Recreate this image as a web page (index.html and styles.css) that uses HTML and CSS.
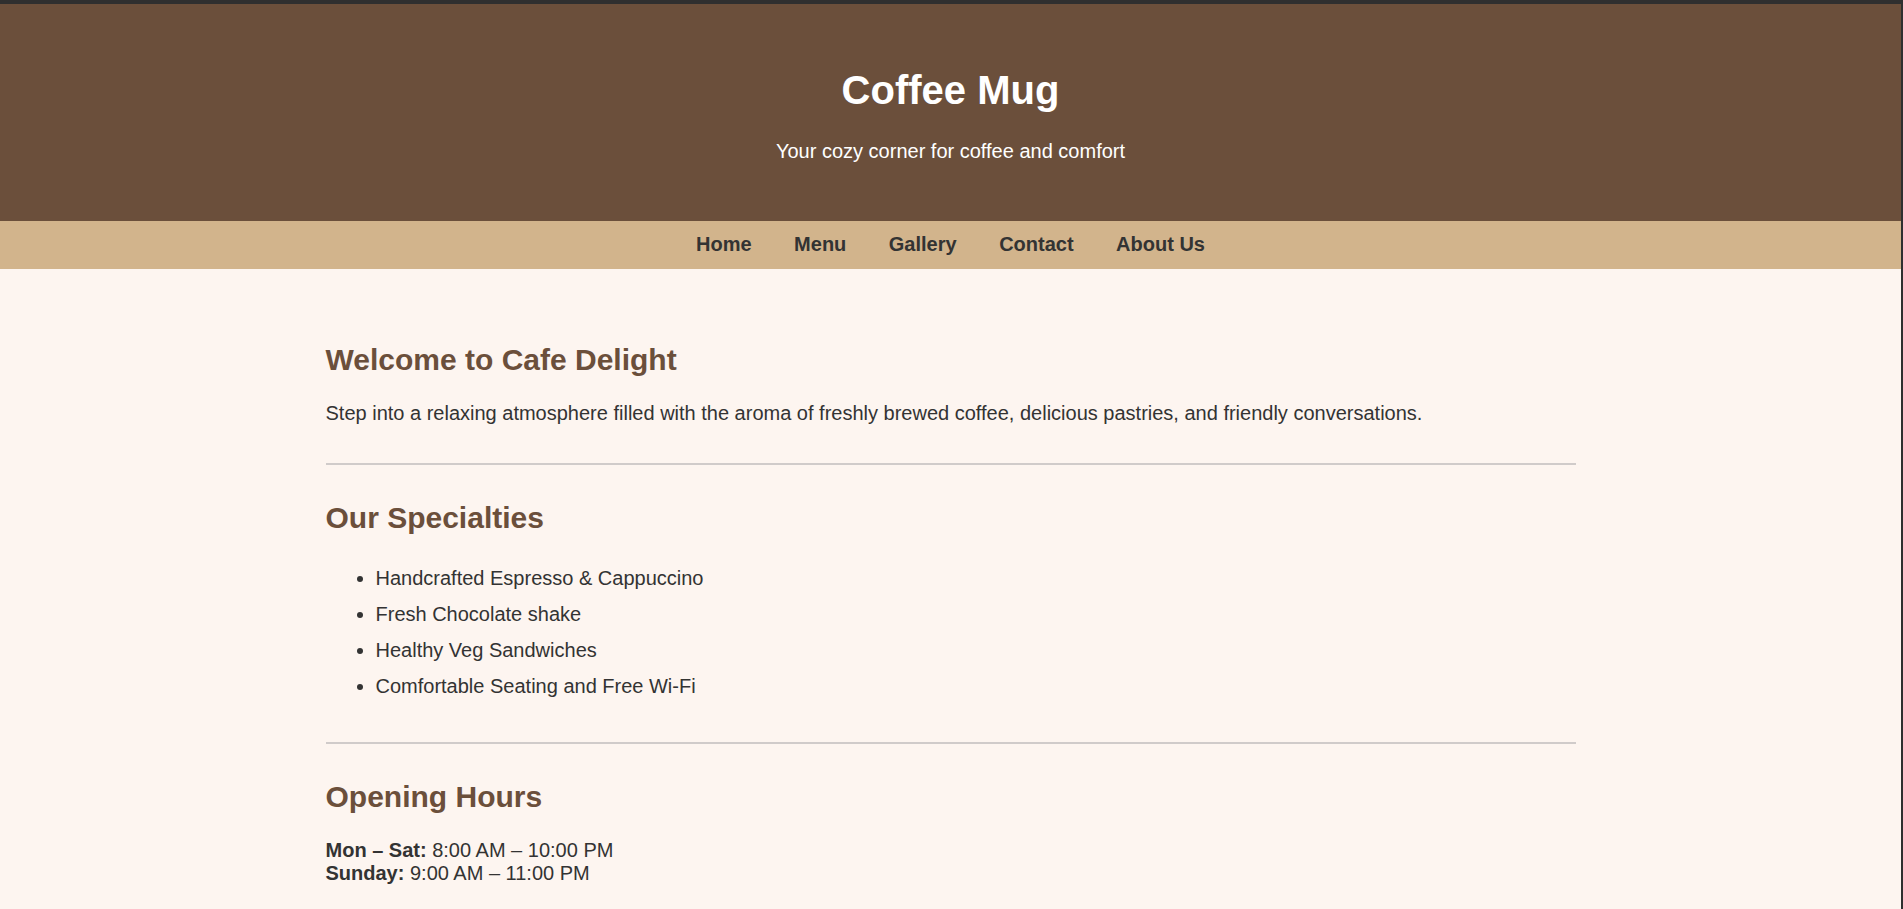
FILE: index.html
```html
<!DOCTYPE html>
<html lang="en">
<head>
<meta charset="utf-8">
<title>Coffee Mug</title>
<link rel="stylesheet" href="styles.css">
</head>
<body>
<div class="page">
  <header class="site-header">
    <h1 class="site-title">Coffee Mug</h1>
    <p class="site-tagline">Your cozy corner for coffee and comfort</p>
  </header>
  <nav class="site-nav">
    <a href="#" class="nav-link">Home</a>
    <a href="#" class="nav-link">Menu</a>
    <a href="#" class="nav-link">Gallery</a>
    <a href="#" class="nav-link">Contact</a>
    <a href="#" class="nav-link">About Us</a>
  </nav>
  <main class="content">
    <section class="section">
      <h2 class="section-title">Welcome to Cafe Delight</h2>
      <p class="text">Step into a relaxing atmosphere filled with the aroma of freshly brewed coffee, delicious pastries, and friendly conversations.</p>
    </section>
    <hr class="divider">
    <section class="section">
      <h2 class="section-title">Our Specialties</h2>
      <ul class="list">
        <li>Handcrafted Espresso &amp; Cappuccino</li>
        <li>Fresh Chocolate shake</li>
        <li>Healthy Veg Sandwiches</li>
        <li>Comfortable Seating and Free Wi-Fi</li>
      </ul>
    </section>
    <hr class="divider">
    <section class="section">
      <h2 class="section-title">Opening Hours</h2>
      <p class="text"><strong>Mon – Sat:</strong> 8:00 AM – 10:00 PM<br><strong>Sunday:</strong> 9:00 AM – 11:00 PM</p>
    </section>
  </main>
</div>
</body>
</html>
```
FILE: styles.css
```css
html {
  background: #2f2f2f;
  margin: 0;
  padding: 0;
}
body {
  margin: 0;
  padding: 0;
  font-family: "Liberation Sans", Arial, sans-serif;
  font-size: 20px;
  color: #333;
}
.page {
  margin: 4px 2px 0 0;
  background: #fdf5f0;
  min-height: calc(100vh - 4px);
}
.site-header {
  background: #6b4f3b;
  color: #fff;
  text-align: center;
  padding: 37.5px 25px;
}
.site-title {
  font-size: 40px;
  font-weight: bold;
  margin: 26.8px 0;
}
.site-tagline {
  font-size: 20px;
  margin: 20px 0;
}
.site-nav {
  background: #d2b48c;
  display: flex;
  justify-content: center;
  gap: 42.5px;
  padding: 12.5px 0;
}
.nav-link {
  color: #333;
  font-weight: bold;
  font-size: 20px;
  text-decoration: none;
}
.content {
  max-width: 1250px;
  margin: 0 auto;
  padding: 49.5px 0 25px;
}
.section-title {
  color: #6b4f3b;
  font-size: 30px;
  font-weight: bold;
  margin: 24.9px 0;
}
.text {
  margin: 20px 0;
}
.divider {
  border: 0;
  border-top: 2px solid #d0cbca;
  margin: 38.5px 0 35.5px;
}
.list {
  margin: 20px 0;
  padding-left: 50px;
}
.list li {
  line-height: 36px;
}
```
